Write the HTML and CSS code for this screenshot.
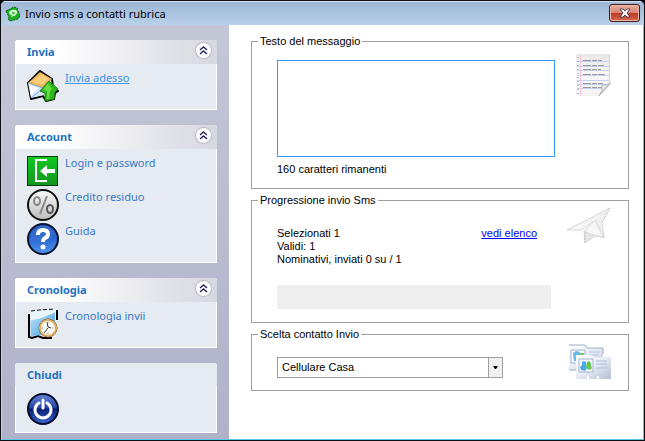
FILE: index.html
```html
<!DOCTYPE html>
<html lang="it">
<head>
<meta charset="utf-8">
<title>Invio sms a contatti rubrica</title>
<link rel="stylesheet" href="styles.css">
</head>
<body>
<div class="window">
  <header class="titlebar">
    <svg class="app-icon" viewBox="0 0 16 16" aria-hidden="true">
      <path d="M1 5 9 1 12 2 15 10 13 13 5 15 3 13 4 11Z" fill="#1fae22" stroke="#0c5a12" stroke-dasharray="2 1"/>
      <path d="M4 6Q8 2 12 5 13 8 9 10L6 11 7 9Q4 9 4 6Z" fill="#d9ffd4"/>
      <path d="M7 6 10 7 7 8" fill="none" stroke="#35b838"/>
    </svg>
    <h1 class="title">Invio sms a contatti rubrica</h1>
    <button class="close" type="button" aria-label="Chiudi finestra">
      <svg viewBox="0 0 12 10" width="12" height="10" aria-hidden="true"><path d="M1 1H4L6 3 8 1H11L8 5 11 9H8L6 7 4 9H1L4 5Z" fill="#fff" stroke="#4b4657"/></svg>
    </button>
  </header>

  <div class="content">
    <nav class="sidebar">
      <section class="panel">
        <div class="panel-head">
          <h2>Invia</h2>
          <button class="collapse" type="button" aria-label="Comprimi Invia"><svg viewBox="0 0 15 15" aria-hidden="true"><path d="M4 7 7.500 4 11 7M4 11 7.500 8 11 11"/></svg></button>
        </div>
        <ul class="items">
          <li><a class="item active" href="#invia">
            <svg viewBox="0 0 32 32" aria-hidden="true">
              <path d="M1 13 13 1 25 9 26 17 31 21 28 23 27 29 19 31 16 26 4 29Z" fill="#fff" stroke="#000" stroke-width="2" stroke-linejoin="round"/>
              <path d="M1 13 4 28 17 25 24 9Z" fill="#d5e6fb"/>
              <path d="M1 13 13 2 25 9 16 18Z" fill="#f0b452"/>
              <path d="M4 12 14 4 22 9 15 15Z" fill="#f9ce7b"/>
              <path d="M1 13 16 18 4 28M16 18 24 9" fill="none" stroke="#84a9dc"/>
              <path d="M2 14 11 18 4 26Z" fill="#fff"/>
              <path d="M22 11 31 19 28 22 27 29 18 31 18 23 13 21Z" fill="#2fb51f" stroke="#178311"/>
              <path d="M21 13 25 19 23 21 22 29 20 29 20 21 16 20Z" fill="#66dd3f"/>
            </svg><span>Invia adesso</span></a></li>
        </ul>
      </section>

      <section class="panel">
        <div class="panel-head">
          <h2>Account</h2>
          <button class="collapse" type="button" aria-label="Comprimi Account"><svg viewBox="0 0 15 15" aria-hidden="true"><path d="M4 7 7.500 4 11 7M4 11 7.500 8 11 11"/></svg></button>
        </div>
        <ul class="items">
          <li><a class="item" href="#login">
            <svg viewBox="0 0 32 32" aria-hidden="true">
              <defs><linearGradient id="green" x2="0" y2="1"><stop stop-color="#10c91f"/><stop offset="1" stop-color="#139620"/></linearGradient></defs>
              <path d="M0 1H31V31H0Z" fill="#02400a"/><path d="M1 2H30V30H1Z" fill="url(#green)"/>
              <path d="M20 5H9V26H20" fill="none" stroke="#fff" stroke-width="2"/>
              <path d="M13 16 20 10V14H28V18H20V22Z" fill="#fff"/>
            </svg><span>Login e password</span></a></li>
          <li><a class="item" href="#credito">
            <svg viewBox="0 0 32 32" aria-hidden="true">
              <defs><linearGradient id="silver" x2="0" y2="1"><stop stop-color="#fafafa"/><stop offset="1" stop-color="#bcbcbc"/></linearGradient></defs>
              <circle cx="16" cy="16" r="15" fill="url(#silver)" stroke="#111" stroke-width="2"/>
              <g fill="none" stroke="#888" stroke-width="2"><ellipse cx="10" cy="12" rx="3" ry="4"/><path d="M20 7 13 25"/><ellipse cx="23" cy="20" rx="3" ry="4" stroke="#555"/></g>
            </svg><span>Credito residuo</span></a></li>
          <li><a class="item" href="#guida">
            <svg viewBox="0 0 32 32" aria-hidden="true">
              <defs><linearGradient id="blue" x2="0" y2="1"><stop stop-color="#1b53b4"/><stop offset=".5" stop-color="#2c69d2"/><stop offset="1" stop-color="#4f95ef"/></linearGradient></defs>
              <circle cx="16" cy="16" r="15" fill="url(#blue)" stroke="#07132e" stroke-width="2"/>
              <path d="M3 19Q16 18 28 10 24 2 16 2 3 4 3 19Z" fill="#3b75d3" opacity=".5"/>
              <path d="M11 12Q11 7 16 7 21 7 21 11 21 14 18 15 16 16 16 19" fill="none" stroke="#fff" stroke-width="4"/>
              <circle cx="16" cy="24" r="2.500" fill="#fff"/>
            </svg><span>Guida</span></a></li>
        </ul>
      </section>

      <section class="panel">
        <div class="panel-head">
          <h2>Cronologia</h2>
          <button class="collapse" type="button" aria-label="Comprimi Cronologia"><svg viewBox="0 0 15 15" aria-hidden="true"><path d="M4 7 7.500 4 11 7M4 11 7.500 8 11 11"/></svg></button>
        </div>
        <ul class="items">
          <li><a class="item" href="#cronologia">
            <svg viewBox="0 0 32 32" aria-hidden="true">
              <defs><linearGradient id="folder" x2="1" y2="1"><stop stop-color="#c4e8fb"/><stop offset="1" stop-color="#3f9add"/></linearGradient></defs>
              <path d="M2 5 7 2 30 1V26L4 31 1 28Z" fill="#e9f6fe"/>
              <path d="M4 3 12 2 28 1" fill="none" stroke="#111" stroke-dasharray="4 2"/>
              <path d="M30 2V12" stroke="#000" stroke-width="2"/>
              <path d="M2 6V29L5 30 11 28 16 30H25" fill="none" stroke="#000" stroke-width="2"/>
              <path d="M3 12 13 10 28 4V26L4 28Z" fill="url(#folder)"/>
              <path d="M3 12 13 10 28 4" fill="none" stroke="#e8f8ff"/>
              <circle cx="21" cy="20" r="9" fill="#fffdf7" stroke="#765126"/><circle cx="21" cy="20" r="8" fill="none" stroke="#e0ad60" stroke-width="2"/>
              <path d="M20 14 21 19 24 20M21 20 17 25" fill="none" stroke="#333"/>
              <path d="M21 14v1M26 20h-1M15 20h1M21 26v-1" stroke="#8b6a3b"/>
            </svg><span>Cronologia invii</span></a></li>
        </ul>
      </section>

      <section class="panel plain">
        <div class="panel-head"><h2>Chiudi</h2></div>
        <ul class="items">
          <li><button class="item" type="button" aria-label="Chiudi">
            <svg viewBox="0 0 32 32" aria-hidden="true">
              <defs><linearGradient id="power" x2="0" y2="1"><stop stop-color="#6385d8"/><stop offset=".45" stop-color="#2846a4"/><stop offset=".5" stop-color="#081f78"/><stop offset="1" stop-color="#3968d0"/></linearGradient></defs>
              <circle cx="16" cy="16" r="15" fill="url(#power)" stroke="#030b2a" stroke-width="2"/>
              <path d="M12 10A8 8 0 1 0 20 10" fill="none" stroke="#fff" stroke-width="3" stroke-linecap="round"/>
              <path d="M16 7V15" stroke="#fff" stroke-width="3" stroke-linecap="round"/>
            </svg></button></li>
        </ul>
      </section>
    </nav>

    <main class="main">
      <fieldset class="group message">
        <legend><label for="testo">Testo del messaggio</label></legend>
        <div class="row">
          <div class="fields">
            <textarea id="testo"></textarea>
            <p>160 caratteri rimanenti</p>
          </div>
          <svg class="art" viewBox="0 0 44 44" aria-hidden="true">
            <defs><linearGradient id="sheet" x2="0" y2="1"><stop stop-color="#e8e8e8"/><stop offset=".5" stop-color="#f8f8f8"/><stop offset="1" stop-color="#f3f3f3"/></linearGradient><linearGradient id="curl" x2="1" y2="1"><stop stop-color="#fff"/><stop offset=".35" stop-color="#f1f1f1"/><stop offset=".7" stop-color="#8d8d8d"/></linearGradient></defs>
            <path d="M9 0H43V30L33 42H9Z" fill="url(#sheet)"/>
            <path d="M10 7.500H43M10 12.500H43M10 16.500H43M10 21.500H43M10 26.500H43M10 30.500H42M10 34.500H35" stroke="#c3d3ee"/>
            <path d="M13.500 0V42M42.500 0V30" stroke="#f3c5e2"/>
            <path d="M11 3V42" stroke="#888" stroke-dasharray="1 3"/>
            <path d="M16 6.500H35M16 11.500H37M16 15.500H34M16 20.500H38M16 29.500H36M16 33.500H35" stroke="#999" stroke-width="1" stroke-dasharray="8 1 5 1"/>
            <path d="M32 42Q36 37 35 31 39 32 44 29Z" fill="url(#curl)" stroke="#b5b5b5"/>
          </svg>
        </div>
      </fieldset>

      <fieldset class="group progress">
        <legend>Progressione invio Sms</legend>
        <div class="row">
          <div class="fields">
            <div class="status">
              <p>Selezionati 1<br>Validi: 1<br>Nominativi, inviati 0 su / 1</p>
              <a href="#elenco">vedi elenco</a>
            </div>
            <div class="bar" role="progressbar" aria-label="Progressione invio" aria-valuemin="0" aria-valuemax="1" aria-valuenow="0"></div>
          </div>
          <svg class="art" viewBox="0 0 44 44" aria-hidden="true">
            <path d="M0 23 20 13 43 1 34 18 37 31 29 30 18 36 17 24Z" fill="#f6f6f6"/>
            <path d="M17 24 27 13 43 1 34 18 37 31Z" fill="#efefef"/>
            <path d="M17 24 28 13 37 31 28 29 18 36Z" fill="#e6e6e6"/>
            <path d="M18 25 28 14 35 29Z" fill="#f7f7f7"/>
            <path d="M0 23H14L27 14M28 13 37 30 28 29 17 24 18 36 28 29" fill="none" stroke="#dadada"/>
            <path d="M0 23 20 13 43 1 35 16 37 31M18 36V25" fill="none" stroke="#c2c2c2" stroke-dasharray="2 1"/>
          </svg>
        </div>
      </fieldset>

      <fieldset class="group contact">
        <legend><label for="contatto">Scelta contatto Invio</label></legend>
        <div class="row">
          <div class="fields">
            <div class="combo">
              <select id="contatto"><option>Cellulare Casa</option></select>
              <span class="arrow" aria-hidden="true"><svg viewBox="0 0 5 3" width="5" height="3"><path d="M0 0H5L3 3H2Z"/></svg></span>
            </div>
          </div>
          <svg class="art" viewBox="0 0 44 36" aria-hidden="true">
            <defs><linearGradient id="card" x2="1" y2="1"><stop stop-color="#fff"/><stop offset=".5" stop-color="#e6ebf4"/><stop offset="1" stop-color="#b2bfd2"/></linearGradient></defs>
            <path d="M2 1H18L20 4H36V26H2Z" fill="url(#card)"/>
            <path d="M2 1H18L20 4H36V10M2 26H9" fill="none" stroke="#9faec1"/>
            <path d="M4 6H18V19H4Z" fill="#f5f9ff" stroke="#a5b5cf"/>
            <path d="M6 9 9 7 13 8 13 17H7Z" fill="#69b9e8"/><path d="M13 9 17 9V14H13Z" fill="#72ca63"/>
            <path d="M22 8H33M22 11H31" stroke="#b2c1df"/>
            <path d="M9 11H25L27 13H44V35H9Z" fill="url(#card)"/>
            <path d="M12 15H26V28H12Z" fill="#f5f9ff" stroke="#a5b5cf"/>
            <path d="M15 18 17 17 19 18V21L20 24 18 27 14 26 13 23 15 21Z" fill="#4eaae6"/>
            <path d="M20 18 22 17 24 19V21L25 24 23 26 20 25 19 22Z" fill="#68c653"/>
            <path d="M29 17H40M29 20H40M29 24H40" stroke="#adbddd"/>
            <path d="M20 35V32H22V35M30 35V32H32V35" fill="#fff"/>
          </svg>
        </div>
      </fieldset>
    </main>
  </div>
</div>
</body>
</html>
```
FILE: styles.css
```css
* { box-sizing: border-box; }
body {
  margin: 0;
  background: #000;
  font: 11px/13px "Liberation Sans", Arial, sans-serif;
  color: #000;
}
h1, h2, p, ul { margin: 0; padding: 0; }
ul { list-style: none; }
button { padding: 0; border: 0; background: none; }
svg { display: block; }

.window {
  display: flex;
  flex-direction: column;
  min-height: 100vh;
  border: 1px solid #0b0d12;
  border-radius: 6px 6px 0 0;
  background: #b9d1ea;
  overflow: hidden;
}
.titlebar {
  display: flex;
  align-items: center;
  gap: 4px;
  height: 24px;
  padding: 0 4px;
  background: linear-gradient(#9cb6d3, #b9d0ea);
  border-top: 1px solid #d5e4f3;
}
.app-icon { width: 16px; height: 16px; }
.title {
  flex: 1;
  font: 11px/16px "Noto Sans", sans-serif;
}
.close {
  display: grid;
  place-items: center;
  align-self: flex-start;
  margin-top: 2px;
  width: 31px;
  height: 18px;
  border: 1px solid #47191a;
  border-radius: 3px;
  background: linear-gradient(#e9aea0 0%, #d88574 48%, #bd3c27 52%, #d3674e 100%);
  box-shadow: inset 0 0 0 1px #edb9aa;
}

.content {
  flex: 1;
  display: flex;
  border: 1px solid #58c8e8;
  border-top: 0;
  border-left-color: #b5d3ee;
  background: #fff;
}
.sidebar {
  display: flex;
  flex-direction: column;
  gap: 15px;
  flex: 0 0 227px;
  padding: 15px 12px 5px 13px;
  background: linear-gradient(#c3c7d6, #b0b2c9);
  font: 11px/16px "Noto Sans", sans-serif;
}
.panel {
  border: 1px solid #fff;
  border-top: 0;
  border-radius: 3px 3px 0 0;
  background: #e6eaf1;
}
.panel-head {
  display: flex;
  align-items: center;
  justify-content: space-between;
  height: 24px;
  margin: 0 -1px;
  padding: 0 6px 0 12px;
  border-radius: 3px 3px 0 0;
  background: linear-gradient(90deg, #fff 20%, #d6d7e0);
}
.plain .panel-head { background: #e6eaf1; }
.panel h2 {
  font-size: 11px;
  line-height: 16px;
  color: #2271c3;
}
.collapse {
  width: 15px;
  height: 15px;
  margin-bottom: 4px;
  border-radius: 50%;
  background: #fff;
  box-shadow: 0 0 1px 1px #b8bac8;
}
.collapse path { fill: none; stroke: #22285f; stroke-width: 1.5; }
.items {
  display: grid;
  gap: 2px;
  padding: 6px 11px 7px;
}
.item {
  display: flex;
  gap: 6px;
  color: #3579c6;
  text-decoration: none;
}
.item svg { width: 32px; height: 32px; }
.active { color: #4393e6; }
.active span { text-decoration: underline; }

.main {
  flex: 1;
  min-width: 0;
  display: flex;
  flex-direction: column;
  gap: 5px;
  padding: 10px 14px 10px 22px;
}
.group {
  min-width: 0;
  margin: 0;
  padding: 0 17px 0 25px;
  border: 1px solid #a0a0a0;
}
.group legend {
  margin-left: -19px;
  padding: 0 2px;
  line-height: 13px;
}
.row {
  display: flex;
  align-items: flex-start;
  justify-content: space-between;
  gap: 11px;
}
.fields { flex: 1; min-width: 0; max-width: 278px; }
.art { flex: none; width: 44px; height: 44px; }

.message .row { padding: 6px 0 12px; }
.message .fields { padding-top: 6px; }
textarea {
  display: block;
  width: 100%;
  height: 97px;
  margin-bottom: 6px;
  padding: 2px;
  border: 1px solid #3399ff;
  border-radius: 0;
  outline: 0;
  background: #fff;
  font: inherit;
  resize: none;
}

.progress .row { padding-bottom: 13px; }
.progress .fields { padding-top: 20px; }
.status {
  display: flex;
  justify-content: space-between;
  margin-bottom: 19px;
  padding-right: 18px;
}
.status a { color: #0000ff; }
.bar { height: 24px; margin-right: 4px; background: #efefef; }

.contact .row { padding: 3px 0 10px; }
.contact .fields { padding-top: 13px; }
.contact .art { height: 36px; }
.combo { position: relative; width: 226px; }
select {
  display: block;
  width: 100%;
  height: 21px;
  padding: 0 20px 0 4px;
  border: 1px solid #a0a0a0;
  border-radius: 0;
  background: #fff;
  color: #000;
  font: inherit;
  appearance: none;
}
.arrow {
  position: absolute;
  inset: 1px 1px 1px auto;
  display: grid;
  place-items: center;
  width: 14px;
  border-left: 1px solid #a0a0a0;
  background: #f0f0f0;
  pointer-events: none;
}
```
